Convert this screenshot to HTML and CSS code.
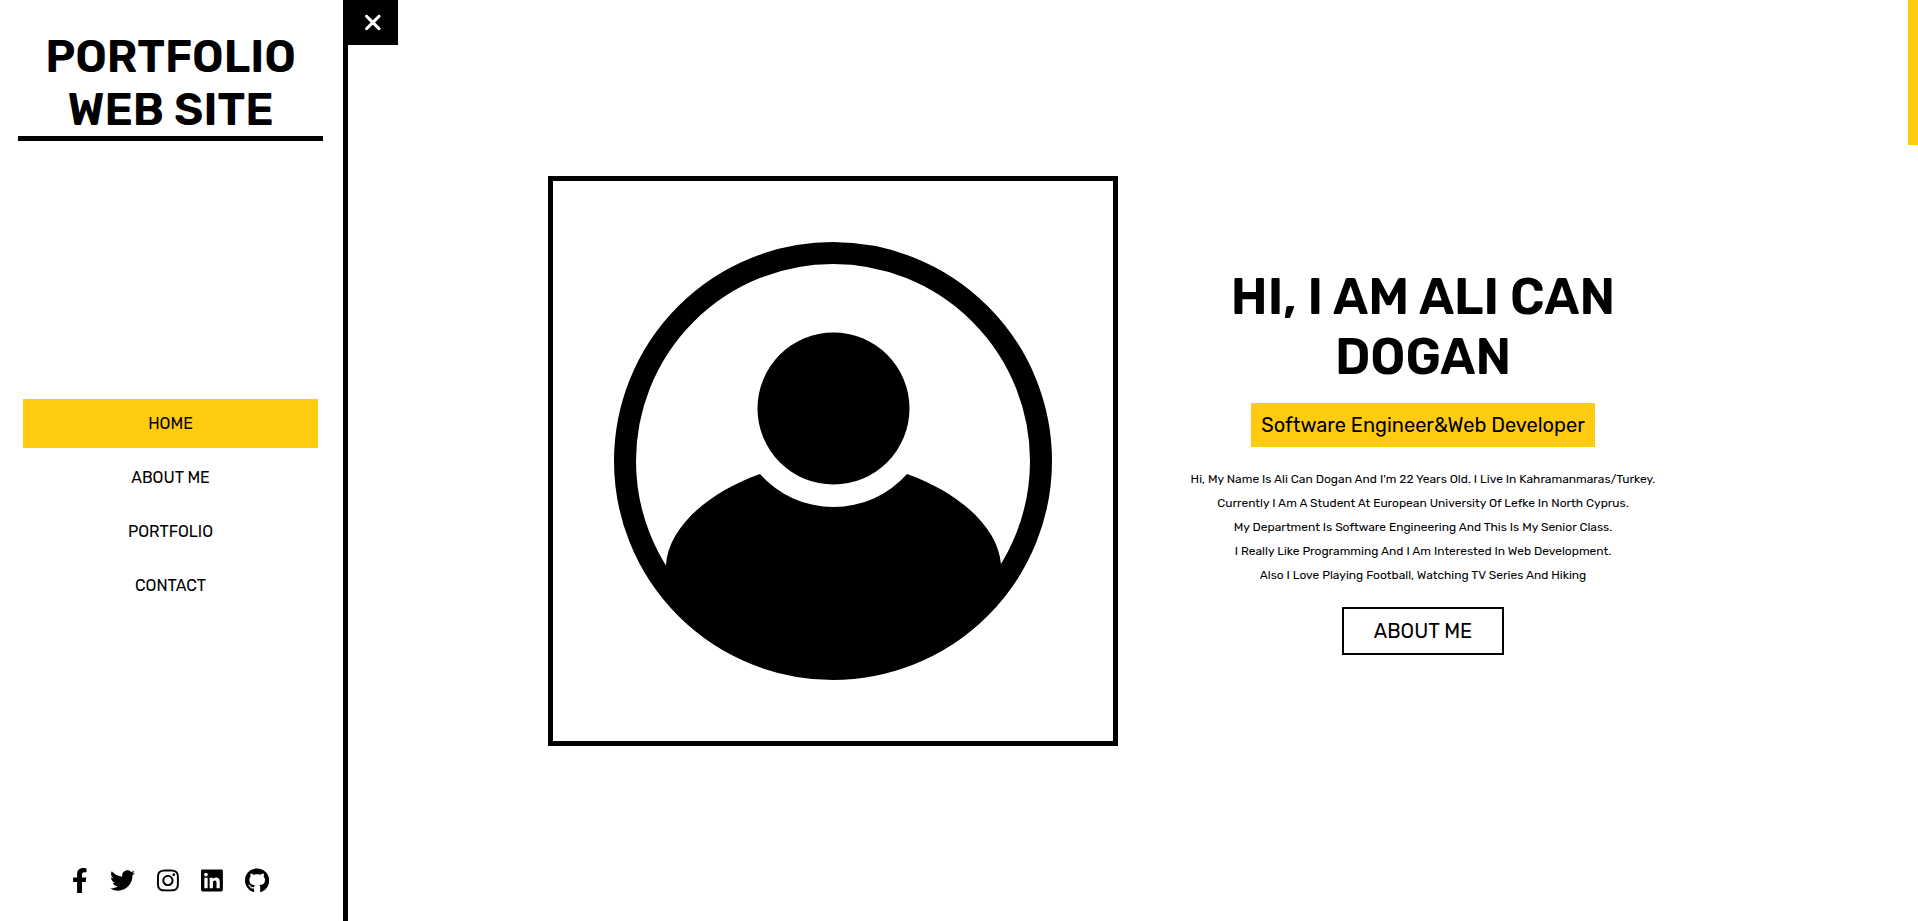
FILE: index.html
```html
<!DOCTYPE html>
<html lang="en">
<head>
<meta charset="utf-8">
<meta name="viewport" content="width=device-width, initial-scale=1">
<title>Portfolio Web Site</title>
<link rel="stylesheet" href="styles.css">
</head>
<body>
<div class="scroll-progress"></div>
<div class="page">
  <header class="sidebar">
    <div class="brand">Portfolio<br>Web Site</div>
    <nav class="nav">
      <a class="nav-link active" href="#home">Home</a>
      <a class="nav-link" href="#about">About Me</a>
      <a class="nav-link" href="#portfolio">Portfolio</a>
      <a class="nav-link" href="#contact">Contact</a>
    </nav>
    <div class="social">
      <a href="#facebook" aria-label="Facebook"><svg viewBox="0 0 320 512"><path d="M279.14 288l14.22-92.66h-88.91v-60.13c0-25.35 12.42-50.06 52.24-50.06h40.42V6.26S260.43 0 225.36 0c-73.22 0-121.08 44.38-121.08 124.72v70.62H22.89V288h81.39v224h100.17V288z"/></svg></a>
      <a href="#twitter" aria-label="Twitter"><svg viewBox="0 0 512 512"><path d="M459.37 151.716c.325 4.548.325 9.097.325 13.645 0 138.72-105.583 298.558-298.558 298.558-59.452 0-114.68-17.219-161.137-47.106 8.447.974 16.568 1.299 25.34 1.299 49.055 0 94.213-16.568 130.274-44.832-46.132-.975-84.792-31.188-98.112-72.772 6.498.974 12.995 1.624 19.818 1.624 9.421 0 18.843-1.3 27.614-3.573-48.081-9.747-84.143-51.98-84.143-102.985v-1.299c13.969 7.797 30.214 12.67 47.431 13.319-28.264-18.843-46.781-51.005-46.781-87.391 0-19.492 5.197-37.36 14.294-52.954 51.655 63.675 129.3 105.258 216.365 109.807-1.624-7.797-2.599-15.918-2.599-24.04 0-57.828 46.782-104.934 104.934-104.934 30.213 0 57.502 12.67 76.67 33.137 23.715-4.548 46.456-13.32 66.599-25.34-7.798 24.366-24.366 44.833-46.132 57.827 21.117-2.273 41.584-8.122 60.426-16.243-14.292 20.791-32.161 39.308-52.628 54.253z"/></svg></a>
      <a href="#instagram" aria-label="Instagram"><svg viewBox="0 0 448 512"><path d="M224.1 141c-63.6 0-114.9 51.3-114.9 114.9s51.3 114.9 114.9 114.9S339 319.5 339 255.9 287.7 141 224.1 141zm0 189.6c-41.1 0-74.7-33.5-74.7-74.7s33.5-74.7 74.7-74.7 74.7 33.5 74.7 74.7-33.6 74.7-74.7 74.7zm146.4-194.3c0 14.9-12 26.8-26.8 26.8-14.9 0-26.8-12-26.8-26.8s12-26.8 26.8-26.8 26.8 12 26.8 26.8zm76.1 27.2c-1.7-35.9-9.9-67.7-36.2-93.9-26.2-26.2-58-34.4-93.9-36.2-37-2.1-147.9-2.1-184.9 0-35.8 1.7-67.6 9.9-93.9 36.1s-34.4 58-36.2 93.9c-2.1 37-2.1 147.9 0 184.9 1.7 35.9 9.9 67.7 36.2 93.9s58 34.4 93.9 36.2c37 2.1 147.9 2.1 184.9 0 35.9-1.7 67.7-9.9 93.9-36.2 26.2-26.2 34.4-58 36.2-93.9 2.1-37 2.1-147.8 0-184.8zM398.8 388c-7.8 19.6-22.9 34.7-42.6 42.6-29.5 11.7-99.5 9-132.1 9s-102.7 2.6-132.1-9c-19.6-7.8-34.7-22.9-42.6-42.6-11.7-29.5-9-99.5-9-132.1s-2.6-102.7 9-132.1c7.8-19.6 22.9-34.7 42.6-42.6 29.5-11.7 99.5-9 132.1-9s102.7-2.6 132.1 9c19.6 7.8 34.7 22.9 42.6 42.6 11.7 29.5 9 99.5 9 132.1s2.7 102.7-9 132.1z"/></svg></a>
      <a href="#linkedin" aria-label="LinkedIn"><svg viewBox="0 0 448 512"><path d="M416 32H31.9C14.3 32 0 46.500 0 64.300v383.400C0 465.500 14.300 480 31.900 480H416c17.600 0 32-14.500 32-32.300V64.300c0-17.800-14.400-32.300-32-32.300zM135.400 416H69V202.200h66.500V416zm-33.200-243c-21.300 0-38.500-17.300-38.500-38.500S80.900 96 102.200 96c21.200 0 38.500 17.300 38.500 38.500 0 21.300-17.200 38.500-38.500 38.500zm282.100 243h-66.400V312c0-24.800-.5-56.700-34.500-56.700-34.600 0-39.900 27-39.900 54.900V416h-66.400V202.200h63.700v29.200h.9c8.900-16.800 30.600-34.500 62.900-34.500 67.200 0 79.700 44.300 79.700 101.900V416z"/></svg></a>
      <a href="#github" aria-label="GitHub"><svg viewBox="0 0 496 512"><path d="M165.900 397.400c0 2-2.300 3.600-5.200 3.600-3.300.3-5.600-1.300-5.600-3.600 0-2 2.300-3.600 5.200-3.600 3-.3 5.600 1.300 5.600 3.600zm-31.100-4.500c-.7 2 1.300 4.300 4.300 4.900 2.600 1 5.600 0 6.200-2s-1.300-4.300-4.300-5.200c-2.600-.7-5.500.3-6.200 2.300zm44.200-1.700c-2.900.7-4.900 2.600-4.600 4.900.3 2 2.900 3.300 5.900 2.600 2.900-.7 4.900-2.600 4.600-4.600-.3-1.900-3-3.200-5.900-2.900zM244.800 8C106.100 8 0 113.300 0 252c0 110.900 69.800 205.800 169.500 239.200 12.800 2.300 17.300-5.600 17.300-12.100 0-6.200-.3-40.400-.3-61.400 0 0-70 15-84.700-29.800 0 0-11.400-29.100-27.800-36.600 0 0-22.900-15.700 1.600-15.400 0 0 24.900 2 38.600 25.800 21.900 38.600 58.600 27.500 72.900 20.900 2.300-16 8.800-27.100 16-33.700-55.900-6.200-112.300-14.300-112.300-110.500 0-27.500 7.600-41.300 23.600-58.900-2.600-6.500-11.100-33.300 2.600-67.900 20.900-6.500 69 27 69 27 20-5.600 41.500-8.500 62.800-8.500s42.800 2.900 62.800 8.500c0 0 48.100-33.600 69-27 13.700 34.700 5.200 61.400 2.600 67.900 16 17.700 25.800 31.500 25.800 58.900 0 96.500-58.900 104.200-114.800 110.500 9.200 7.900 17 22.900 17 46.400 0 33.700-.3 75.400-.3 83.600 0 6.500 4.600 14.400 17.300 12.100C428.200 457.800 496 362.900 496 252 496 113.300 383.500 8 244.800 8zM97.200 352.900c-1.300 1-1 3.300.7 5.200 1.600 1.600 3.900 2.300 5.200 1 1.300-1 1-3.300-.7-5.200-1.600-1.600-3.900-2.300-5.200-1zm-10.800-8.100c-.7 1.300.3 2.900 2.300 3.900 1.600 1 3.600.7 4.300-.7.700-1.300-.3-2.900-2.300-3.900-2-.6-3.600-.3-4.300.7zm32.400 35.600c-1.600 1.300-1 4.300 1.300 6.200 2.300 2.300 5.200 2.600 6.500 1 1.300-1.300.7-4.300-1.300-6.200-2.200-2.300-5.200-2.600-6.500-1zm-11.400-14.700c-1.600 1-1.600 3.600 0 5.900 1.600 2.300 4.300 3.300 5.600 2.300 1.600-1.300 1.600-3.900 0-6.200-1.400-2.300-4-3.300-5.600-2z"/></svg></a>
    </div>
  </header>
  <main class="content">
    <button class="menu-toggle" type="button" aria-label="Close menu"><svg viewBox="0 0 320 512"><path d="M310.600 150.600c12.500-12.500 12.500-32.800 0-45.300s-32.800-12.500-45.300 0L160 210.700 54.600 105.400c-12.500-12.500-32.800-12.500-45.300 0s-12.500 32.800 0 45.300L114.700 256 9.400 361.400c-12.500 12.500-12.500 32.800 0 45.300s32.800 12.500 45.300 0L160 301.300 265.400 406.600c12.500 12.500 32.800 12.500 45.300 0s12.500-32.800 0-45.300L205.300 256 310.600 150.600z"/></svg></button>
    <section class="hero" id="home">
      <div class="portrait">
        <svg viewBox="0 0 560 560" role="img" aria-label="Profile picture">
          <circle cx="280" cy="280" r="208" fill="none" stroke="#000" stroke-width="22"/>
          <circle cx="280.500" cy="227.500" r="76"/>
          <path d="M207 293A98.300 98.300 0 0 0 354 293C410 313 446 349 448 384L460 400A216 216 0 0 1 100 400L113 384C115 349 151 313 207 293z"/>
        </svg>
      </div>
      <div class="intro">
        <h1>Hi, I am Ali Can Dogan</h1>
        <span class="role">Software Engineer&amp;Web Developer</span>
        <p>Hi, My Name Is Ali Can Dogan And I'm 22 Years Old. I Live In Kahramanmaras/Turkey.<br>
          Currently I Am A Student At European University Of Lefke In North Cyprus.<br>
          My Department Is Software Engineering And This Is My Senior Class.<br>
          I Really Like Programming And I Am Interested In Web Development.<br>
          Also I Love Playing Football, Watching TV Series And Hiking</p>
        <a class="btn" href="#about">About Me</a>
      </div>
    </section>
  </main>
</div>
</body>
</html>
```
FILE: styles.css
```css
* {
  margin: 0;
  padding: 0;
  box-sizing: border-box;
}

body {
  font-family: Rubik, Roboto, "Liberation Sans", sans-serif;
  color: #000;
  background: #fff;
}

a {
  color: inherit;
  text-decoration: none;
}

.page {
  display: flex;
  min-height: 100vh;
}

.scroll-progress {
  position: fixed;
  top: 0;
  right: 0;
  z-index: 2;
  width: 10px;
  height: 145px;
  background: #ffcb0e;
}

.sidebar {
  flex: 0 0 348px;
  display: flex;
  flex-direction: column;
  justify-content: space-between;
  padding: 30px 20px 28px 18px;
  border-right: 5px solid #000;
  text-align: center;
  text-transform: uppercase;
}

.brand {
  border-bottom: 5px solid #000;
  font-size: 45px;
  font-weight: 600;
  line-height: 53px;
}

.nav {
  display: flex;
  flex-direction: column;
  gap: 5px;
  padding: 0 5px;
}

.nav-link {
  padding: 15px;
  font-size: 16px;
  line-height: 19px;
}

.nav-link.active {
  background: #ffcb0e;
}

.social {
  display: flex;
  justify-content: center;
  gap: 22px;
}

.social svg {
  display: block;
  height: 25px;
}

.content {
  position: relative;
  flex: 1;
  display: flex;
  align-items: center;
}

.menu-toggle {
  position: absolute;
  top: 0;
  left: 0;
  display: flex;
  align-items: center;
  justify-content: center;
  width: 50px;
  height: 45px;
  border: 0;
  background: #000;
  cursor: pointer;
}

.menu-toggle svg {
  height: 25px;
  fill: #fff;
}

.hero {
  flex: 1;
  display: flex;
  align-items: center;
  gap: 10px;
  padding: 0 200px;
}

.portrait {
  flex: 0 1 570px;
  border: 5px solid #000;
}

.portrait svg {
  display: block;
  width: 100%;
}

.intro {
  flex: 1;
  display: flex;
  flex-direction: column;
  align-items: center;
  text-align: center;
}

.intro h1 {
  max-width: 480px;
  margin-bottom: 16px;
  font-size: 50px;
  font-weight: 600;
  line-height: 60px;
  text-transform: uppercase;
}

.role {
  padding: 10px;
  background: #ffcb0e;
  font-size: 20px;
  line-height: 24px;
}

.intro p {
  margin: 20px 0;
  font-size: 12px;
  line-height: 24px;
}

.btn {
  padding: 10px 30px;
  border: 2px solid #000;
  font-size: 20px;
  line-height: 24px;
  text-transform: uppercase;
}
```
